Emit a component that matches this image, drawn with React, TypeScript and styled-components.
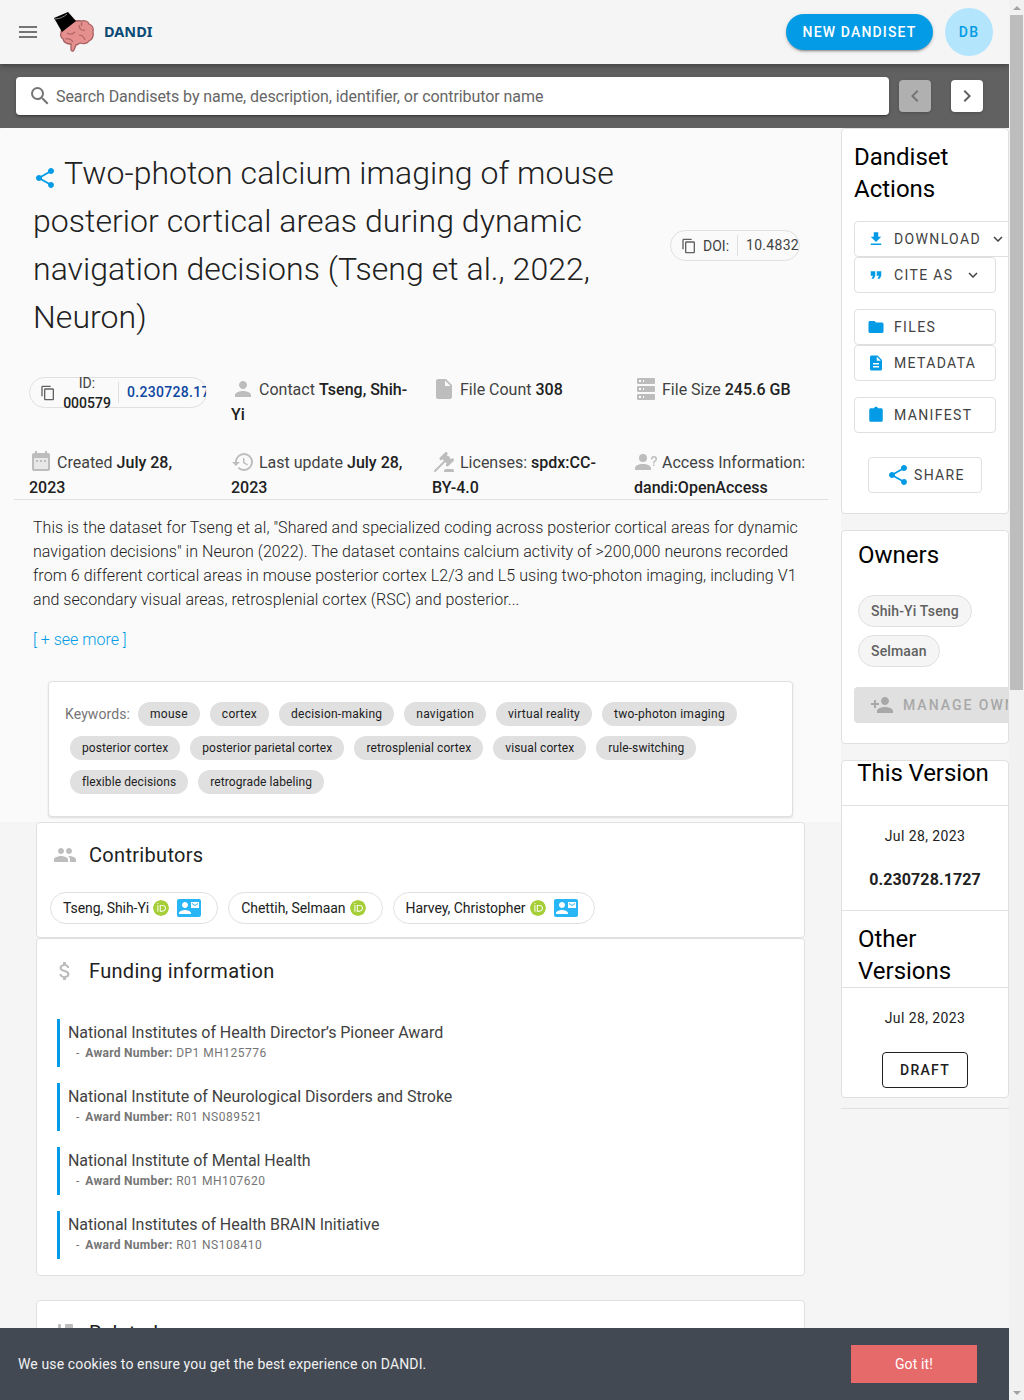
import styled, { createGlobalStyle } from "styled-components";
import {
  MdAttachMoney,
  MdChevronLeft,
  MdChevronRight,
  MdContactMail,
  MdContentCopy,
  MdDescription,
  MdFileDownload,
  MdFolder,
  MdFormatQuote,
  MdGroup,
  MdHistory,
  MdInsertDriveFile,
  MdKeyboardArrowDown,
  MdMenu,
  MdPerson,
  MdPersonAdd,
  MdSearch,
  MdShare,
} from "react-icons/md";
import { SiOrcid } from "react-icons/si";

const GlobalStyle = createGlobalStyle`
  html, body {
    margin: 0;
    padding: 0;
    height: 1400px;
    overflow: hidden;
    background: #f5f5f5;
    font-family: Roboto, "Liberation Sans", sans-serif;
  }
  * { box-sizing: border-box; }
`;

const Screen = styled.div`
  display: flex;
  width: 1024px;
  height: 1400px;
  overflow: hidden;
`;

const Page = styled.div`
  position: relative;
  width: 1009px;
  height: 1400px;
  overflow: hidden;
  background: #f5f5f5;
`;

const ScrollTrack = styled.div`
  width: 15px;
  height: 1400px;
  background: #f1f1f1;
  display: flex;
  flex-direction: column;
  align-items: center;
`;

const ScrollArrow = styled.div<{ $down?: boolean }>`
  width: 15px;
  height: 15px;
  flex: none;
  display: flex;
  align-items: center;
  justify-content: center;
  order: ${(p) => (p.$down ? 3 : 0)};
  margin-top: ${(p) => (p.$down ? "auto" : "0")};
  &::before {
    content: "";
    border-left: 4px solid transparent;
    border-right: 4px solid transparent;
    ${(p) => (p.$down ? "border-top" : "border-bottom")}: 4px solid #a3a3a3;
  }
`;

const ScrollThumb = styled.div`
  width: 13px;
  height: 675px;
  background: #bdbdbd;
  order: 1;
`;

const AppBar = styled.header`
  position: relative;
  z-index: 3;
  height: 64px;
  background: #f5f5f5;
  box-shadow: 0 2px 4px -1px rgba(0, 0, 0, 0.2), 0 4px 5px 0 rgba(0, 0, 0, 0.14);
  display: flex;
  align-items: center;
  padding: 0 16px 0 16px;
`;

const MenuIcon = styled(MdMenu)`
  font-size: 24px;
  color: #757575;
  flex: none;
`;

const LogoArt = styled.svg`
  width: 44px;
  height: 54px;
  margin-left: 12px;
  flex: none;
`;

const Brand = styled.span`
  margin: -2px 0 0 8px;
  font-size: 14.5px;
  font-weight: 700;
  color: #0b4a75;
  font-family: "Noto Sans", Roboto, sans-serif;
`;

const NewButton = styled.button`
  margin-left: auto;
  width: 147px;
  height: 36px;
  border: 0;
  border-radius: 18px;
  background: #039be5;
  color: #fff;
  font: 500 14px Roboto, sans-serif;
  letter-spacing: 1.15px;
  box-shadow: 0 3px 1px -2px rgba(0, 0, 0, 0.2), 0 2px 2px 0 rgba(0, 0, 0, 0.14), 0 1px 5px 0 rgba(0, 0, 0, 0.12);
`;

const Avatar = styled.div`
  margin-left: 12px;
  width: 48px;
  height: 48px;
  border-radius: 50%;
  background: #b3e5fc;
  color: #039be5;
  font-size: 14px;
  font-weight: 500;
  letter-spacing: 1.25px;
  display: flex;
  align-items: center;
  justify-content: center;
`;

const SearchBar = styled.div`
  height: 64px;
  background: #616161;
  display: flex;
  align-items: center;
  padding: 0 26px 0 16px;
`;

const SearchField = styled.div`
  flex: 1;
  height: 38px;
  background: #fff;
  border-radius: 4px;
  box-shadow: 0 3px 1px -2px rgba(0, 0, 0, 0.2), 0 2px 2px 0 rgba(0, 0, 0, 0.14), 0 1px 5px 0 rgba(0, 0, 0, 0.12);
  display: flex;
  align-items: center;
  padding: 0 12px;
  gap: 4px;
  color: #666;
  font-size: 16px;
  letter-spacing: -0.07px;
`;

const SearchGlyph = styled(MdSearch)`
  font-size: 24px;
  color: #757575;
`;

const PagerButton = styled.div<{ $off?: boolean }>`
  width: 32px;
  height: 32px;
  margin-left: ${(p) => (p.$off ? "10px" : "20px")};
  border-radius: 4px;
  background: ${(p) => (p.$off ? "#b0b0b0" : "#fff")};
  color: ${(p) => (p.$off ? "#757575" : "#616161")};
  display: flex;
  align-items: center;
  justify-content: center;
  font-size: 24px;
  box-shadow: 0 1px 3px rgba(0, 0, 0, 0.2);
`;

const Columns = styled.div`
  display: flex;
  align-items: flex-start;
`;

const MainColumn = styled.main`
  width: 841px;
  flex: none;
`;

const SideColumn = styled.aside`
  width: 168px;
  flex: none;
  overflow: hidden;
`;

const Overview = styled.section`
  height: 694px;
  background: #fafafa;
  border-radius: 4px 4px 0 0;
  padding-top: 21px;
`;

const TitleRow = styled.div`
  display: flex;
  align-items: center;
  padding-left: 33px;
`;

const Title = styled.h1`
  margin: 0;
  width: 600px;
  font-size: 32px;
  line-height: 48px;
  font-weight: 300;
  color: #212121;
  letter-spacing: 0.05px;
`;

const ShareGlyph = styled(MdShare)`
  font-size: 24px;
  color: #039be5;
  vertical-align: -6px;
  margin-right: 7px;
`;

const CopyChip = styled.div<{ $w: number }>`
  width: ${(p) => p.$w}px;
  height: 31px;
  flex: none;
  display: flex;
  align-items: center;
  border: 1px solid #e0e0e0;
  border-radius: 16px;
  overflow-x: clip;
  overflow-y: visible;
  font-size: 14px;
  color: #424242;
`;

const DoiChip = styled(CopyChip)`
  margin: 1px 0 0 37px;
`;

const ChipCopyIcon = styled(MdContentCopy)`
  font-size: 16px;
  color: #616161;
  margin-left: 10px;
  flex: none;
`;

const ChipLabel = styled.span`
  margin-left: 6px;
  width: 34px;
  flex: none;
`;

const ChipValue = styled.span<{ $strong?: boolean }>`
  display: block;
  border-left: 1px solid #e0e0e0;
  padding-left: 8px;
  white-space: nowrap;
  line-height: 21px;
  letter-spacing: 0.3px;
  flex: none;
  font-weight: ${(p) => (p.$strong ? 500 : 400)};
  color: ${(p) => (p.$strong ? "#0d47a1" : "#424242")};
`;

const IdLabel = styled.span`
  width: 62px;
  padding-top: 1px;
  flex: none;
  text-align: center;
  line-height: 20px;
  color: #424242;
  & b {
    font-weight: 500;
    display: block;
  }
`;

const MetaGrid = styled.div`
  display: grid;
  grid-template-columns: 202px 201px 202px 202px;
  grid-template-rows: 73px 47px;
  margin: 36px 0 0 14px;
  padding: 0 0 0 15px;
  width: 814px;
  border-bottom: 1px solid #e0e0e0;
  height: 123px;
`;

const MetaCell = styled.div`
  font-size: 16px;
  line-height: 25px;
  color: #424242;
  padding-right: 22px;
  & b {
    font-weight: 500;
    color: #212121;
  }
`;

const MetaIconSlot = styled.span`
  display: inline-block;
  color: #bdbdbd;
  font-size: 24px;
  line-height: 0;
  vertical-align: -6px;
  margin-right: 4px;
`;

const MetaSvg = styled.svg`
  width: 1em;
  height: 1em;
  fill: currentColor;
`;

const Description = styled.p`
  margin: 16px 0 0 33px;
  width: 776px;
  font-size: 16px;
  line-height: 24px;
  font-weight: 300;
  color: #212121;
  letter-spacing: 0.05px;
`;

const SeeMore = styled.div`
  margin: 16px 0 0 33px;
  font-size: 16px;
  line-height: 24px;
  font-weight: 300;
  color: #039be5;
`;

const KeywordCard = styled.div`
  margin: 29px 0 0 48px;
  width: 745px;
  height: 136px;
  background: #fff;
  border-radius: 4px;
  border: 1px solid #e0e0e0;
  box-shadow: 0 1px 2px rgba(0, 0, 0, 0.12);
  padding: 20px 16px 0 16px;
  font-size: 14px;
  color: #757575;
`;

const KeywordLine = styled.div`
  display: flex;
  align-items: center;
  height: 24px;
  margin-bottom: 10px;
  gap: 10px;
  padding-left: 5px;
`;

const KeywordLabel = styled.span`
  margin-left: -5px;
  margin-right: -2px;
  letter-spacing: 0.1px;
`;

const Keyword = styled.span<{ $tight?: boolean }>`
  height: 24px;
  border-radius: 12px;
  background: #e0e0e0;
  color: #212121;
  font-size: 12px;
  letter-spacing: ${(p) => (p.$tight ? "0.1px" : "0.24px")};
  padding: 0 12px;
  display: flex;
  align-items: center;
  white-space: nowrap;
`;

const Card = styled.section<{ $h: number; $gap?: number }>`
  margin: ${(p) => p.$gap ?? 0}px 0 0 36px;
  width: 769px;
  height: ${(p) => p.$h}px;
  background: #fff;
  border-radius: 4px;
  border: 1px solid #e0e0e0;
  padding: 0 13px;
  overflow: hidden;
`;

const CardHead = styled.div`
  height: 64px;
  display: flex;
  align-items: center;
  gap: 9px;
  font-size: 20px;
  color: #212121;
  letter-spacing: 0.31px;
`;

const FundHead = styled(CardHead)`
  margin-bottom: 16px;
`;

const CardIcon = styled.span`
  width: 30px;
  display: flex;
  justify-content: center;
  color: #bdbdbd;
  font-size: 24px;
`;

const RelatedGlyph = styled.svg`
  width: 24px;
  height: 24px;
  fill: #bdbdbd;
`;

const PeopleRow = styled.div`
  display: flex;
  gap: 10px;
  margin-top: 5px;
`;

const Person = styled.div`
  height: 32px;
  padding: 0 16px 0 12px;
  display: flex;
  align-items: center;
  gap: 4px;
  border: 1px solid #e0e0e0;
  border-radius: 16px;
  font-size: 14px;
  color: #212121;
  letter-spacing: -0.05px;
`;

const Orcid = styled(SiOrcid)`
  font-size: 16px;
  color: #a6ce39;
  background: #fff;
  border-radius: 50%;
`;

const MailIcon = styled(MdContactMail)`
  font-size: 24px;
  color: #29b6f6;
  margin-left: 4px;
`;

const FundItem = styled.div`
  margin: 0 0 16px 7px;
  height: 48px;
  border-left: 3px solid #039be5;
  padding: 4px 0 0 8px;
`;

const FundName = styled.div`
  font-size: 16px;
  line-height: 20px;
  color: #424242;
  letter-spacing: -0.05px;
`;

const FundAward = styled.div`
  font-size: 12px;
  line-height: 20px;
  color: #757575;
  letter-spacing: 0.5px;
  padding-left: 8px;
  & b {
    font-weight: 700;
    margin-left: 2px;
    letter-spacing: 0.28px;
  }
`;

const SideCard = styled.section<{ $h: number; $gap?: number }>`
  margin-top: ${(p) => p.$gap ?? 0}px;
  height: ${(p) => p.$h}px;
  background: #fff;
  border: 1px solid #e0e0e0;
  border-radius: 4px;
  overflow: hidden;
`;

const SideTitle = styled.h2<{ $left: number }>`
  margin: 0;
  padding-left: ${(p) => p.$left}px;
  font-size: 24px;
  line-height: 32px;
  font-weight: 400;
  color: #000;
`;

const ActionsTitle = styled(SideTitle)`
  padding-top: 12px;
  margin-bottom: 16px;
  width: 150px;
`;

const ActionStack = styled.div`
  padding-left: 12px;
  display: flex;
  flex-direction: column;
  align-items: flex-start;
`;

const Action = styled.div<{ $w?: number; $gap?: number }>`
  width: ${(p) => p.$w ?? 142}px;
  height: 36px;
  flex: none;
  margin-top: ${(p) => p.$gap ?? 0}px;
  border: 1px solid #e0e0e0;
  border-radius: 4px;
  background: #fff;
  display: flex;
  align-items: center;
  padding-left: 12px;
  font-size: 14px;
  color: #424242;
  letter-spacing: 1.35px;
  white-space: nowrap;
  & > svg:first-child {
    color: #039be5;
    font-size: 18px;
    margin-right: 9px;
    flex: none;
  }
`;

const Caret = styled(MdKeyboardArrowDown)`
  font-size: 18px;
  color: #424242;
  margin-left: 8px;
  flex: none;
`;

const CiteCaret = styled(Caret)`
  margin-left: 11px;
`;

const ShareAction = styled(Action)`
  margin-left: 14px;
  padding-left: 17px;
  & > svg:first-child {
    font-size: 24px;
    margin-right: 4px;
  }
`;

const OwnerTitle = styled(SideTitle)`
  padding-top: 8px;
  margin-bottom: 24px;
`;

const OwnerChip = styled.div`
  margin: 0 0 8px 16px;
  width: fit-content;
  height: 32px;
  border-radius: 16px;
  border: 1px solid #e0e0e0;
  background: #f5f5f5;
  padding: 0 12px;
  display: flex;
  align-items: center;
  font-size: 14px;
  font-weight: 500;
  color: #616161;
  letter-spacing: 0.15px;
`;

const ManageButton = styled.div`
  margin: 20px 0 0 12px;
  width: 200px;
  height: 36px;
  border-radius: 4px;
  background: #e0e0e0;
  display: flex;
  align-items: center;
  padding-left: 16px;
  gap: 9px;
  color: #a8a8a8;
  font-size: 14px;
  font-weight: 500;
  letter-spacing: 2px;
  white-space: nowrap;
  & svg {
    font-size: 24px;
  }
`;

const VersionHead = styled.div`
  height: 49px;
  border-bottom: 1px solid #e0e0e0;
  margin-top: -4px;
  padding-right: 4px;
  text-align: center;
  letter-spacing: -0.1px;
`;

const VersionBlock = styled.div<{ $h: number }>`
  height: ${(p) => p.$h}px;
  display: flex;
  flex-direction: column;
  align-items: center;
`;

const VersionDate = styled.div`
  margin-top: 20px;
  font-size: 14px;
  line-height: 20px;
  color: #212121;
  letter-spacing: 0.4px;
`;

const VersionName = styled.div`
  margin-top: 24px;
  font-size: 16px;
  line-height: 20px;
  font-weight: 700;
  color: #212121;
  letter-spacing: 0.1px;
`;

const OtherHead = styled.div`
  border-top: 1px solid #e0e0e0;
  border-bottom: 1px solid #e0e0e0;
  height: 78px;
  padding-top: 12px;
  overflow: hidden;
`;

const DraftButton = styled.div`
  margin-top: 24px;
  width: 86px;
  height: 36px;
  border: 1px solid #212121;
  border-radius: 4px;
  display: flex;
  align-items: center;
  justify-content: center;
  font-size: 14px;
  font-weight: 500;
  letter-spacing: 1.25px;
  color: #212121;
`;

const SideRule = styled.div`
  margin-top: 10px;
  border-top: 1px solid #e0e0e0;
`;

const CookieBar = styled.div`
  position: absolute;
  left: 0;
  right: 0;
  bottom: 0;
  height: 72px;
  z-index: 5;
  background: #424953;
  display: flex;
  align-items: center;
  padding: 0 32px 0 18px;
  font-size: 14px;
  letter-spacing: 0.13px;
  color: #f1f1f1;
`;

const CookieButton = styled.div`
  margin-left: auto;
  width: 126px;
  height: 38px;
  background: #e76a6a;
  color: #fff;
  display: flex;
  align-items: center;
  justify-content: center;
  font-size: 14px;
`;

const keywordLines = [
  ["mouse", "cortex", "decision-making", "navigation", "virtual reality", "two-photon imaging"],
  ["posterior cortex", "posterior parietal cortex", "retrosplenial cortex", "visual cortex", "rule-switching"],
  ["flexible decisions", "retrograde labeling"],
];

const people = [
  { name: "Tseng, Shih-Yi", mail: true },
  { name: "Chettih, Selmaan", mail: false },
  { name: "Harvey, Christopher", mail: true },
];

const funding = [
  ["National Institutes of Health Director’s Pioneer Award", "DP1 MH125776"],
  ["National Institute of Neurological Disorders and Stroke", "R01 NS089521"],
  ["National Institute of Mental Health", "R01 MH107620"],
  ["National Institutes of Health BRAIN Initiative", "R01 NS108410"],
];

const Logo = () => (
  <LogoArt viewBox="0 0 44 54">
    <path
      d="M9 28c0-4 3-6 6-7 3-4 9-6 14-5 3-1 7 0 8 3 3 1 5 4 4 8 1 4-1 8-4 9-2 3-6 3-9 2-2 1-3 2-4 2l-2 5c-1 2-2 1-3 0l0-6c-4 0-7-1-8-5-2-1-3-4-2-6z"
      fill="#e58f8f"
      stroke="#a55f5f"
      strokeWidth="1.3"
    />
    <path
      d="M15 28c3 2 6 1 8-1M27 20c0 4 3 6 6 5M13 34c3-1 6 0 8 3M27 30c3 0 5 2 6 5M30 17c-1 2-1 3 0 4"
      fill="none"
      stroke="#b06666"
      strokeWidth="1.2"
    />
    <path d="M2 13L16 7l8 9-14 11z" fill="#000" />
    <path d="M3 14c4 0 9-2 12-5" fill="none" stroke="#ddd" strokeWidth="0.6" />
  </LogoArt>
);

const ServerIcon = () => (
  <MetaSvg viewBox="0 0 24 24">
    <path d="M4,1H20A1,1 0 0,1 21,2V6A1,1 0 0,1 20,7H4A1,1 0 0,1 3,6V2A1,1 0 0,1 4,1M4,9H20A1,1 0 0,1 21,10V14A1,1 0 0,1 20,15H4A1,1 0 0,1 3,14V10A1,1 0 0,1 4,9M4,17H20A1,1 0 0,1 21,18V22A1,1 0 0,1 20,23H4A1,1 0 0,1 3,22V18A1,1 0 0,1 4,17M9,5H10V3H9V5M9,13H10V11H9V13M9,21H10V19H9V21M5,3V5H7V3H5M5,11V13H7V11H5M5,19V21H7V19H5Z" />
  </MetaSvg>
);

const CalendarIcon = () => (
  <MetaSvg viewBox="0 0 24 24">
    <rect x="5" y="8" width="14" height="11" fill="#e8e8e8" />
    <path d="M9,10H7V12H9V10M13,10H11V12H13V10M17,10H15V12H17V10M19,3H18V1H16V3H8V1H6V3H5C3.89,3 3,3.9 3,5V19A2,2 0 0,0 5,21H19A2,2 0 0,0 21,19V5A2,2 0 0,0 19,3M19,19H5V8H19V19Z" />
  </MetaSvg>
);

const GavelIcon = () => (
  <MetaSvg viewBox="0 0 24 24">
    <path d="M2.3,20.28L11.9,10.68L10.5,9.26L9.78,9.97C9.39,10.36 8.76,10.36 8.37,9.97L7.66,9.26C7.27,8.87 7.27,8.24 7.66,7.85L13.32,2.19C13.71,1.8 14.34,1.8 14.73,2.19L15.44,2.9C15.83,3.29 15.83,3.92 15.44,4.31L14.73,5L16.15,6.43C16.54,6.04 17.17,6.04 17.56,6.43C17.95,6.82 17.95,7.46 17.56,7.85L18.97,9.26L19.68,8.55C20.07,8.16 20.71,8.16 21.1,8.55L21.8,9.26C22.19,9.65 22.19,10.29 21.8,10.68L16.15,16.33C15.76,16.72 15.12,16.72 14.73,16.33L14.03,15.63C13.63,15.24 13.63,14.6 14.03,14.21L14.73,13.5L13.32,12.09L3.71,21.7C3.32,22.09 2.69,22.09 2.3,21.7C1.91,21.31 1.91,20.67 2.3,20.28M20,19A2,2 0 0,1 22,21V22H12V21A2,2 0 0,1 14,19H20Z" />
  </MetaSvg>
);

const AccountQuestionIcon = () => (
  <MetaSvg viewBox="0 0 24 24">
    <path d="M13,8A4,4 0 0,1 9,12A4,4 0 0,1 5,8A4,4 0 0,1 9,4A4,4 0 0,1 13,8M17,18V20H1V18C1,15.79 4.58,14 9,14C13.42,14 17,15.79 17,18M20.5,14.5V16H19V14.5H20.5M18.5,9.5H17V9A3,3 0 0,1 20,6A3,3 0 0,1 23,9C23,9.97 22.5,10.88 21.71,11.41L21.41,11.6C20.84,12 20.5,12.61 20.5,13.25V13.5H19V13.25C19,12.11 19.59,11.05 20.5,10.5L20.81,10.3C21.15,10.1 21.5,9.56 21.5,9A1.5,1.5 0 0,0 20,7.5A1.5,1.5 0 0,0 18.5,9V9.5Z" />
  </MetaSvg>
);

const ClipboardIcon = () => (
  <svg viewBox="0 0 24 24" width="1em" height="1em" fill="currentColor">
    <path d="M19 3h-4.18C14.4 1.84 13.3 1 12 1S9.6 1.84 9.18 3H5a2 2 0 00-2 2v14a2 2 0 002 2h14a2 2 0 002-2V5a2 2 0 00-2-2z" />
  </svg>
);

export default function App() {
  return (
    <Screen>
      <GlobalStyle />
      <Page>
        <AppBar>
          <MenuIcon />
          <Logo />
          <Brand>DANDI</Brand>
          <NewButton>NEW DANDISET</NewButton>
          <Avatar>DB</Avatar>
        </AppBar>
        <SearchBar>
          <SearchField>
            <SearchGlyph />
            Search Dandisets by name, description, identifier, or contributor name
          </SearchField>
          <PagerButton $off>
            <MdChevronLeft />
          </PagerButton>
          <PagerButton>
            <MdChevronRight />
          </PagerButton>
        </SearchBar>
        <Columns>
          <MainColumn>
            <Overview>
              <TitleRow>
                <Title>
                  <ShareGlyph />
                  Two-photon calcium imaging of mouse posterior cortical areas during dynamic navigation decisions (Tseng et al., 2022, Neuron)
                </Title>
                <DoiChip $w={130}>
                  <ChipCopyIcon />
                  <ChipLabel>DOI:</ChipLabel>
                  <ChipValue>10.48324/dandi.000579</ChipValue>
                </DoiChip>
              </TitleRow>
              <MetaGrid>
                <MetaCell>
                  <CopyChip $w={178}>
                    <ChipCopyIcon />
                    <IdLabel>
                      ID: <b>000579</b>
                    </IdLabel>
                    <ChipValue $strong>0.230728.1727</ChipValue>
                  </CopyChip>
                </MetaCell>
                <MetaCell>
                  <MetaIconSlot>
                    <MdPerson />
                  </MetaIconSlot>
                  Contact <b>Tseng, Shih-Yi</b>
                </MetaCell>
                <MetaCell>
                  <MetaIconSlot>
                    <MdInsertDriveFile />
                  </MetaIconSlot>
                  File Count <b>308</b>
                </MetaCell>
                <MetaCell>
                  <MetaIconSlot>
                    <ServerIcon />
                  </MetaIconSlot>
                  File Size <b>245.6 GB</b>
                </MetaCell>
                <MetaCell>
                  <MetaIconSlot>
                    <CalendarIcon />
                  </MetaIconSlot>
                  Created <b>July 28, 2023</b>
                </MetaCell>
                <MetaCell>
                  <MetaIconSlot>
                    <MdHistory />
                  </MetaIconSlot>
                  Last update <b>July 28, 2023</b>
                </MetaCell>
                <MetaCell>
                  <MetaIconSlot>
                    <GavelIcon />
                  </MetaIconSlot>
                  Licenses: <b>spdx:CC-BY-4.0</b>
                </MetaCell>
                <MetaCell>
                  <MetaIconSlot>
                    <AccountQuestionIcon />
                  </MetaIconSlot>
                  Access Information: <b>dandi:OpenAccess</b>
                </MetaCell>
              </MetaGrid>
              <Description>
                This is the dataset for Tseng et al, "Shared and specialized coding across posterior cortical areas for dynamic navigation decisions" in Neuron (2022). The dataset contains calcium activity of &gt;200,000 neurons recorded from 6 different cortical areas in mouse posterior cortex L2/3 and L5 using two-photon imaging, including V1 and secondary visual areas, retrosplenial cortex (RSC) and posterior...
              </Description>
              <SeeMore>[ + see more ]</SeeMore>
              <KeywordCard>
                {keywordLines.map((line, i) => (
                  <KeywordLine key={i}>
                    {i === 0 && <KeywordLabel>Keywords:</KeywordLabel>}
                    {line.map((word) => (
                      <Keyword key={word} $tight={i > 0}>
                        {word}
                      </Keyword>
                    ))}
                  </KeywordLine>
                ))}
              </KeywordCard>
            </Overview>
            <Card $h={116}>
              <CardHead>
                <CardIcon>
                  <MdGroup />
                </CardIcon>
                Contributors
              </CardHead>
              <PeopleRow>
                {people.map((person) => (
                  <Person key={person.name}>
                    {person.name}
                    <Orcid />
                    {person.mail && <MailIcon />}
                  </Person>
                ))}
              </PeopleRow>
            </Card>
            <Card $h={338}>
              <FundHead>
                <CardIcon>
                  <MdAttachMoney />
                </CardIcon>
                Funding information
              </FundHead>
              {funding.map(([name, award]) => (
                <FundItem key={name}>
                  <FundName>{name}</FundName>
                  <FundAward>
                    - <b>Award Number:</b> {award}
                  </FundAward>
                </FundItem>
              ))}
            </Card>
            <Card $h={120} $gap={24}>
              <CardHead>
                <CardIcon>
                  <RelatedGlyph viewBox="0 0 24 24">
                    <rect x="5" y="3" width="3" height="18" rx="1" />
                    <rect x="12" y="3" width="8" height="18" rx="1" />
                  </RelatedGlyph>
                </CardIcon>
                Related
              </CardHead>
            </Card>
          </MainColumn>
          <SideColumn>
            <SideCard $h={386}>
              <ActionsTitle $left={12}>Dandiset Actions</ActionsTitle>
              <ActionStack>
                <Action $w={170}>
                  <MdFileDownload />
                  DOWNLOAD
                  <Caret />
                </Action>
                <Action>
                  <MdFormatQuote />
                  CITE AS
                  <CiteCaret />
                </Action>
                <Action $gap={16}>
                  <MdFolder />
                  FILES
                </Action>
                <Action>
                  <MdDescription />
                  METADATA
                </Action>
                <Action $gap={16}>
                  <ClipboardIcon />
                  MANIFEST
                </Action>
                <ShareAction $w={114} $gap={24}>
                  <MdShare />
                  SHARE
                </ShareAction>
              </ActionStack>
            </SideCard>
            <SideCard $h={214} $gap={16}>
              <OwnerTitle $left={16}>Owners</OwnerTitle>
              <OwnerChip>Shih-Yi Tseng</OwnerChip>
              <OwnerChip>Selmaan</OwnerChip>
              <ManageButton>
                <MdPersonAdd />
                MANAGE OWNERS
              </ManageButton>
            </SideCard>
            <SideCard $h={338} $gap={16}>
              <VersionHead>
                <SideTitle $left={0}>This Version</SideTitle>
              </VersionHead>
              <VersionBlock $h={104}>
                <VersionDate>Jul 28, 2023</VersionDate>
                <VersionName>0.230728.1727</VersionName>
              </VersionBlock>
              <OtherHead>
                <SideTitle $left={16}>Other Versions</SideTitle>
              </OtherHead>
              <VersionBlock $h={110}>
                <VersionDate>Jul 28, 2023</VersionDate>
                <DraftButton>DRAFT</DraftButton>
              </VersionBlock>
            </SideCard>
            <SideRule />
          </SideColumn>
        </Columns>
        <CookieBar>
          We use cookies to ensure you get the best experience on DANDI.
          <CookieButton>Got it!</CookieButton>
        </CookieBar>
      </Page>
      <ScrollTrack>
        <ScrollArrow />
        <ScrollThumb />
        <ScrollArrow $down />
      </ScrollTrack>
    </Screen>
  );
}
